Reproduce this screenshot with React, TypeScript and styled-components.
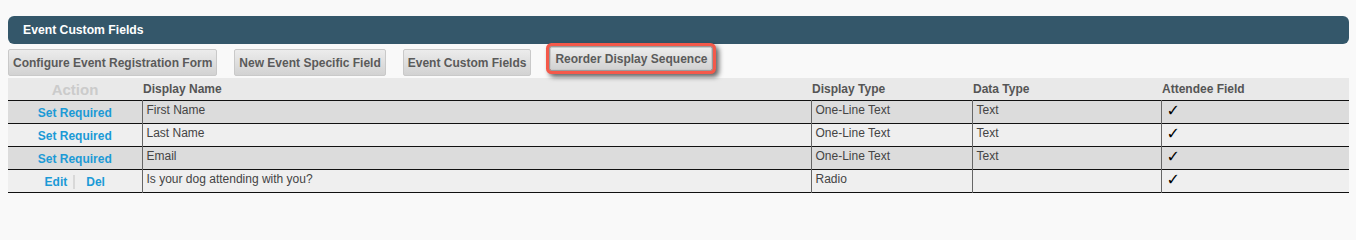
import React from 'react'
import styled, { createGlobalStyle } from 'styled-components'

interface Field {
  name: string
  displayType: string
  dataType: string
  custom: boolean
}

const fields: Field[] = [
  { name: 'First Name', displayType: 'One-Line Text', dataType: 'Text', custom: false },
  { name: 'Last Name', displayType: 'One-Line Text', dataType: 'Text', custom: false },
  { name: 'Email', displayType: 'One-Line Text', dataType: 'Text', custom: false },
  { name: 'Is your dog attending with you?', displayType: 'Radio', dataType: '', custom: true },
]

const GlobalStyle = createGlobalStyle`
  body {
    margin: 0;
    background: #f9f9f9;
    font-family: "Liberation Sans", Arial, sans-serif;
  }
`

function App() {
  return (
    <>
      <GlobalStyle />
      <Page>
        <TitleBar>Event Custom Fields</TitleBar>
        <Toolbar>
          <ToolButton>Configure Event Registration Form</ToolButton>
          <ToolButton>New Event Specific Field</ToolButton>
          <ToolButton>Event Custom Fields</ToolButton>
          <ToolButton $highlighted>Reorder Display Sequence</ToolButton>
        </Toolbar>
        <FieldTable>
          <colgroup>
            <col style={{ width: 134 }} />
            <col style={{ width: 669 }} />
            <col style={{ width: 161 }} />
            <col style={{ width: 189 }} />
            <col />
          </colgroup>
          <thead>
            <tr>
              <HeadCell $muted>Action</HeadCell>
              <HeadCell>Display Name</HeadCell>
              <HeadCell>Display Type</HeadCell>
              <HeadCell>Data Type</HeadCell>
              <HeadCell>Attendee Field</HeadCell>
            </tr>
          </thead>
          <tbody>
            {fields.map((f, i) => (
              <Row key={f.name} $shaded={i % 2 === 0}>
                <ActionCell>
                  {f.custom ? (
                    <>
                      <ActionLink $divider href="#">Edit</ActionLink>
                      <ActionLink href="#">Del</ActionLink>
                    </>
                  ) : (
                    <ActionLink href="#">Set Required</ActionLink>
                  )}
                </ActionCell>
                <Cell>{f.name}</Cell>
                <Cell>{f.displayType}</Cell>
                <Cell>{f.dataType}</Cell>
                <Cell>
                  <Check>✓</Check>
                </Cell>
              </Row>
            ))}
          </tbody>
        </FieldTable>
      </Page>
    </>
  )
}

const Page = styled.div`
  padding: 16px 7px 0 8px;
`

const TitleBar = styled.div`
  height: 28px;
  line-height: 28px;
  padding-left: 15px;
  background: #34576a;
  border-radius: 6px;
  color: #fff;
  font-size: 12.2px;
  font-weight: bold;
`

const Toolbar = styled.div`
  display: flex;
  align-items: flex-start;
  gap: 17px;
  margin-top: 5px;
  height: 27px;
`

const ToolButton = styled.button<{ $highlighted?: boolean }>`
  height: ${(p) => (p.$highlighted ? '23px' : '27px')};
  margin-top: ${(p) => (p.$highlighted ? '-2px' : '0')};
  margin-left: ${(p) => (p.$highlighted ? '2px' : '0')};
  padding: 0 4px;
  border: 1px solid #c9c9c9;
  border-radius: 2px;
  background: linear-gradient(#ececec, #d2d2d2);
  color: #5a5a5a;
  font-family: "Liberation Sans", Arial, sans-serif;
  font-size: 12px;
  font-weight: bold;
  white-space: nowrap;
  cursor: pointer;
  box-shadow: ${(p) =>
    p.$highlighted
      ? '0 0 0 1px #9a9a9a, 0 0 0 4px #f4594a, 3px 3px 5px 4px rgba(0, 0, 0, 0.6)'
      : 'none'};
`

const FieldTable = styled.table`
  width: 100%;
  margin-top: 2px;
  border-collapse: collapse;
  table-layout: fixed;
  font-size: 12px;
`

const HeadCell = styled.th<{ $muted?: boolean }>`
  height: 22px;
  padding: 0 1px;
  background: #e9e9e9;
  text-align: ${(p) => (p.$muted ? 'center' : 'left')};
  color: ${(p) => (p.$muted ? '#cbcbcb' : '#555')};
  font-size: ${(p) => (p.$muted ? '15px' : '12px')};
  font-weight: bold;
  vertical-align: middle;
`

const Row = styled.tr<{ $shaded: boolean }>`
  background: ${(p) => (p.$shaded ? '#dcdcdc' : '#efefef')};
  border-top: 1px solid #111;
  border-bottom: 1px solid #111;
`

const Cell = styled.td`
  height: 20px;
  padding: 2px 4px 0;
  border-left: 1px solid #666;
  color: #444;
  line-height: 14px;
  vertical-align: top;
  overflow: hidden;
`

const ActionCell = styled.td`
  height: 20px;
  padding: 2px 0 0;
  text-align: center;
  vertical-align: middle;
`

const ActionLink = styled.a<{ $divider?: boolean }>`
  color: #1b9ad6;
  font-weight: bold;
  text-decoration: none;
  ${(p) =>
    p.$divider &&
    `
    padding-right: 6px;
    margin-right: 11px;
    border-right: 2px solid #d8d8d8;
  `}
`

const Check = styled.span`
  display: inline-block;
  padding-left: 1px;
  font-family: "DejaVu Sans", sans-serif;
  font-size: 16px;
  line-height: 16px;
  color: #000;
  font-weight: bold;
`

export default App
